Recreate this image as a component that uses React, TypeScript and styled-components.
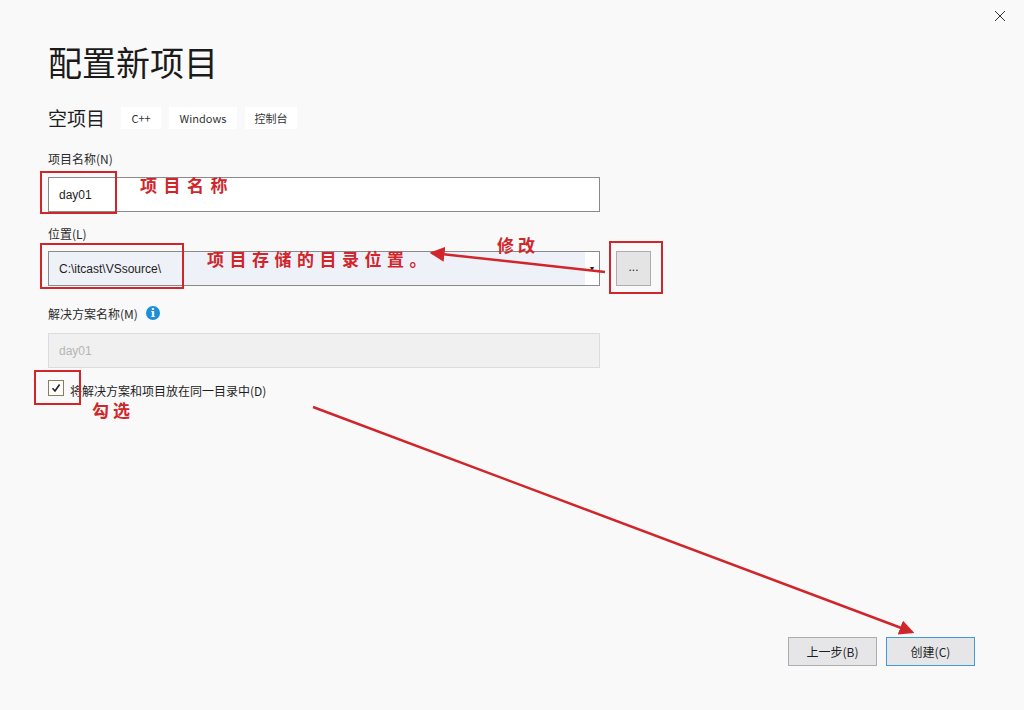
import React from "react";
import styled, { createGlobalStyle } from "styled-components";

const GlobalStyle = createGlobalStyle`
  html, body {
    margin: 0;
    padding: 0;
    background: #f9f9f9;
  }
  body {
    font-family: "Liberation Sans", "Noto Sans CJK SC", sans-serif;
    color: #1e1e1e;
  }
`;

const Page = styled.div`
  position: relative;
  width: 1024px;
  height: 710px;
  display: flex;
  flex-direction: column;
  background: #f9f9f9;
  overflow: hidden;
`;

const Content = styled.div`
  display: flex;
  flex-direction: column;
  padding: 41px 48px 0 48px;
`;

const Title = styled.h1`
  margin: 0;
  font-family: "Noto Sans CJK SC", sans-serif;
  font-weight: 400;
  font-size: 34px;
  line-height: 41px;
  color: #1b1b1b;
`;

const SubRow = styled.div`
  display: flex;
  align-items: center;
  gap: 8px;
  height: 22px;
  margin-top: 25px;
`;

const SubTitle = styled.span`
  font-family: "Noto Sans CJK SC", sans-serif;
  font-size: 19px;
  line-height: 22px;
  margin-right: 8px;
`;

const Tag = styled.span<{ w: number }>`
  display: flex;
  align-items: center;
  justify-content: center;
  width: ${(p) => p.w}px;
  height: 22px;
  background: #ffffff;
  font-family: "Noto Sans CJK SC", sans-serif;
  font-size: 11px;
  color: #333;
`;

const Label = styled.div<{ top: number }>`
  display: flex;
  align-items: center;
  gap: 8px;
  height: 16px;
  margin-top: ${(p) => p.top}px;
  font-family: "Noto Sans CJK SC", sans-serif;
  font-size: 12px;
  color: #2b2b2b;
`;

const InfoIcon = styled.span`
  display: inline-flex;
  align-items: center;
  justify-content: center;
  width: 14px;
  height: 14px;
  border-radius: 50%;
  background: #1c8fd8;
  color: #fff;
  font-family: "DejaVu Serif", serif;
  font-weight: 700;
  font-size: 11px;
`;

const FieldRow = styled.div<{ top: number }>`
  display: flex;
  align-items: center;
  gap: 16px;
  margin-top: ${(p) => p.top}px;
`;

const TextBox = styled.div<{ disabled?: boolean }>`
  box-sizing: border-box;
  width: 552px;
  height: 35px;
  display: flex;
  align-items: center;
  padding-left: 10px;
  border: 1px solid ${(p) => (p.disabled ? "#dcdcdc" : "#8a8a8a")};
  background: ${(p) => (p.disabled ? "#f0f0f0" : "#ffffff")};
  color: ${(p) => (p.disabled ? "#b5b5b5" : "#1e1e1e")};
  font-size: 12px;
`;

const Combo = styled.div`
  box-sizing: border-box;
  width: 552px;
  height: 35px;
  display: flex;
  align-items: stretch;
  border: 1px solid #8a8a8a;
  background: #ffffff;
  font-size: 12px;
`;

const ComboText = styled.div`
  flex: 1;
  display: flex;
  align-items: center;
  padding-left: 10px;
  background: #eef1f8;
`;

const ComboArrow = styled.div`
  width: 14px;
  display: flex;
  align-items: center;
  justify-content: center;
  font-size: 7px;
  color: #222;
`;

const BrowseButton = styled.button`
  box-sizing: border-box;
  width: 35px;
  height: 35px;
  border: 1px solid #adadad;
  background: #e4e4e4;
  font-size: 12px;
  padding: 0 0 4px 0;
  color: #222;
`;

const CheckRow = styled.div`
  display: flex;
  align-items: center;
  gap: 6px;
  margin-top: 12px;
  height: 16px;
  font-family: "Noto Sans CJK SC", sans-serif;
  font-size: 12px;
`;

const CheckText = styled.span`
  padding-top: 4px;
`;

const CheckBox = styled.span`
  box-sizing: border-box;
  width: 16px;
  height: 16px;
  border: 1px solid #8b7f5e;
  background: #fff;
  display: flex;
  align-items: center;
  justify-content: center;
`;

const Footer = styled.div`
  margin-top: auto;
  display: flex;
  justify-content: flex-end;
  gap: 9px;
  padding: 0 49px 44px 0;
`;

const FooterButton = styled.button<{ primary?: boolean }>`
  box-sizing: border-box;
  width: 89px;
  height: 29px;
  border: 1px solid ${(p) => (p.primary ? "#3f9ad6" : "#adadad")};
  background: #e6e6e9;
  font-family: "Noto Sans CJK SC", sans-serif;
  font-size: 12px;
  color: #1e1e1e;
`;

const CloseButton = styled.div`
  position: absolute;
  top: 9px;
  right: 17px;
  width: 14px;
  height: 14px;
`;

const Mark = styled.div<{ x: number; y: number; w: number; h: number }>`
  position: absolute;
  left: ${(p) => p.x}px;
  top: ${(p) => p.y}px;
  width: ${(p) => p.w}px;
  height: ${(p) => p.h}px;
  box-sizing: border-box;
  border: 2px solid #d0262b;
  pointer-events: none;
`;

const Note = styled.div<{ x: number; y: number; spacing: number }>`
  position: absolute;
  left: ${(p) => p.x}px;
  top: ${(p) => p.y}px;
  font-family: "Noto Sans CJK SC", serif;
  font-weight: 700;
  font-size: 17px;
  line-height: 18px;
  letter-spacing: ${(p) => p.spacing}px;
  color: #d0262b;
  white-space: nowrap;
`;

const Arrows = styled.svg`
  position: absolute;
  left: 0;
  top: 0;
  pointer-events: none;
`;

export default function App() {
  return (
    <Page>
      <GlobalStyle />
      <Content>
        <Title>配置新项目</Title>
        <SubRow>
          <SubTitle>空项目</SubTitle>
          <Tag w={40}>C++</Tag>
          <Tag w={68}>Windows</Tag>
          <Tag w={52}>控制台</Tag>
        </SubRow>

        <Label top={21}>项目名称(N)</Label>
        <FieldRow top={11}>
          <TextBox>day01</TextBox>
        </FieldRow>

        <Label top={13}>位置(L)</Label>
        <FieldRow top={10}>
          <Combo>
            <ComboText>C:\itcast\VSsource\</ComboText>
            <ComboArrow>▼</ComboArrow>
          </Combo>
          <BrowseButton>...</BrowseButton>
        </FieldRow>

        <Label top={19}>
          解决方案名称(M)
          <InfoIcon>i</InfoIcon>
        </Label>
        <FieldRow top={12}>
          <TextBox disabled>day01</TextBox>
        </FieldRow>

        <CheckRow>
          <CheckBox>
            <svg width="10" height="10" viewBox="0 0 10 10">
              <path d="M1.5 5.2 L4 8 L8.6 1.5" fill="none" stroke="#222" strokeWidth="1.6" />
            </svg>
          </CheckBox>
          <CheckText>将解决方案和项目放在同一目录中(D)</CheckText>
        </CheckRow>
      </Content>

      <Footer>
        <FooterButton>上一步(B)</FooterButton>
        <FooterButton primary>创建(C)</FooterButton>
      </Footer>

      <CloseButton>
        <svg width="14" height="14" viewBox="0 0 14 14">
          <path d="M2 2 L12 12 M12 2 L2 12" stroke="#333" strokeWidth="1" />
        </svg>
      </CloseButton>

      <Mark x={40} y={171} w={77} h={43} />
      <Mark x={40} y={243} w={144} h={46} />
      <Mark x={609} y={241} w={54} h={53} />
      <Mark x={34} y={370} w={47} h={35} />

      <Note x={140} y={176} spacing={6.5}>项目名称</Note>
      <Note x={207} y={250} spacing={5.5}>项目存储的目录位置。</Note>
      <Note x={497} y={236} spacing={4}>修改</Note>
      <Note x={92} y={401} spacing={4}>勾选</Note>

      <Arrows width="1024" height="710" viewBox="0 0 1024 710">
        <defs>
          <marker id="head" markerWidth="6" markerHeight="6" refX="5" refY="3" orient="auto" markerUnits="strokeWidth">
            <path d="M0 0 L6 3 L0 6 Z" fill="#d0262b" />
          </marker>
        </defs>
        <line x1="605" y1="272" x2="432" y2="253" stroke="#d0262b" strokeWidth="2.5" markerEnd="url(#head)" />
        <line x1="313" y1="407" x2="912" y2="632" stroke="#d0262b" strokeWidth="2.5" markerEnd="url(#head)" />
      </Arrows>
    </Page>
  );
}
